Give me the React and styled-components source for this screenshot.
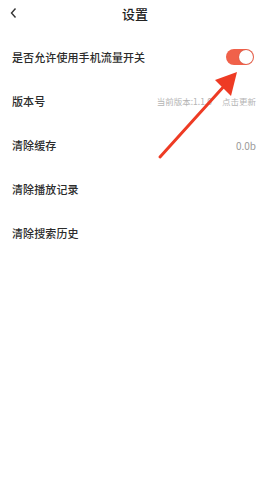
import React from "react";
import styled, { createGlobalStyle } from "styled-components";

const Global = createGlobalStyle`
  html, body { margin: 0; padding: 0; background: #fff; }
  body { font-family: "Noto Sans CJK SC", "Noto Sans", sans-serif; }
`;

const Page = styled.div`
  position: relative;
  width: 270px;
  height: 480px;
  background: #fff;
  overflow: hidden;
`;

const Header = styled.div`
  height: 26px;
  display: flex;
  align-items: center;
  justify-content: center;
  position: relative;
`;

const Back = styled.svg`
  position: absolute;
  left: 9px;
  top: 7px;
`;

const Title = styled.div`
  font-size: 13px;
  font-weight: 500;
  color: #222;
  line-height: 1;
`;

const List = styled.div`
  padding-top: 9px;
  display: flex;
  flex-direction: column;
`;

const Row = styled.div`
  height: 44px;
  display: flex;
  align-items: center;
  justify-content: space-between;
  padding: 0 14px 0 12px;
`;

const Label = styled.div`
  font-size: 11px;
  font-weight: 500;
  color: #2b2b2b;
  letter-spacing: 0.1px;
`;

const Value = styled.div`
  font-size: ${(p) => p.size || 10}px;
  color: ${(p) => p.color || "#9a9a9a"};
  display: flex;
  gap: ${(p) => p.gap || 0}px;
`;

const Toggle = styled.div`
  width: 28px;
  height: 16px;
  border-radius: 8px;
  background: #f0614a;
  position: relative;
  margin-right: 2px;
`;

const Knob = styled.div`
  position: absolute;
  right: 1px;
  top: 1px;
  width: 14px;
  height: 14px;
  border-radius: 50%;
  background: #fff;
  box-shadow: 0 0 1px rgba(0,0,0,0.3);
`;

const Arrow = styled.svg`
  position: absolute;
  left: 0;
  top: 0;
  pointer-events: none;
`;

export default function App() {
  return (
    <Page>
      <Global />
      <Header>
        <Back width="10" height="12" viewBox="0 0 10 12">
          <path d="M6.5 1.5 L2.5 6 L6.5 10.5" fill="none" stroke="#333" strokeWidth="1.4" />
        </Back>
        <Title>设置</Title>
      </Header>
      <List>
        <Row>
          <Label>是否允许使用手机流量开关</Label>
          <Toggle><Knob /></Toggle>
        </Row>
        <Row>
          <Label>版本号</Label>
          <Value size={8.5} color="#b4b4b4" gap={10}>
            <span>当前版本:1.1.0</span>
            <span>点击更新</span>
          </Value>
        </Row>
        <Row>
          <Label>清除缓存</Label>
          <Value>0.0b</Value>
        </Row>
        <Row>
          <Label>清除播放记录</Label>
        </Row>
        <Row>
          <Label>清除搜索历史</Label>
        </Row>
      </List>
      <Arrow width="270" height="480" viewBox="0 0 270 480">
        <line x1="160" y1="157" x2="226" y2="84" stroke="#ee3b24" strokeWidth="3" strokeLinecap="round" />
        <polygon points="237,72 215,80 231,96" fill="#ee3b24" />
      </Arrow>
    </Page>
  );
}
